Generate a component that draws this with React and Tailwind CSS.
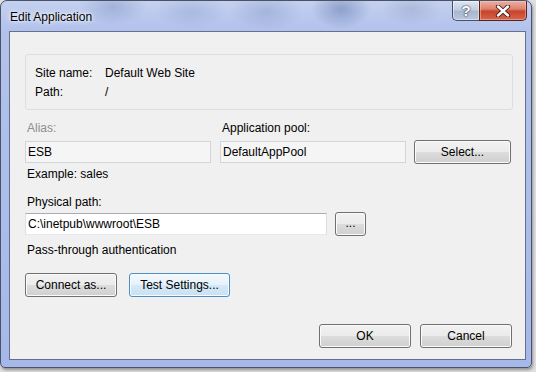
import React from 'react';

const font = { fontFamily: '"Liberation Sans", Arial, sans-serif' };

const btn =
  'flex items-center justify-center h-[24px] rounded-[3px] border border-[#707070] bg-[linear-gradient(to_bottom,#f2f2f2_0%,#ebebeb_48%,#dddddd_50%,#cfcfcf_100%)] shadow-[inset_0_0_0_1px_#fbfbfb] text-[12px] text-black';

const btnHot =
  'flex items-center justify-center h-[24px] rounded-[3px] border border-[#4f8fc4] bg-[linear-gradient(to_bottom,#f3f9fd_0%,#e6f2fb_48%,#d5e9f7_50%,#c8e1f3_100%)] shadow-[inset_0_0_0_1px_#f6fbff] text-[12px] text-black';

const readonlyBox =
  'flex items-center h-[22px] w-[186px] border border-[#d3d5d8] bg-[#f5f5f5] pl-[2px] text-[12px] text-black';

const CaptionButtons = () => (
  <div className="flex mr-[-1px]">
    <div className="flex items-center justify-center w-[27px] h-[20px] border border-[#46526a] border-t-0 border-r-0 rounded-bl-[5px] bg-[linear-gradient(to_bottom,#dfe6f3_0%,#c3cde2_45%,#a9b6cf_55%,#b9c6de_100%)] shadow-[inset_0_0_0_1px_rgba(255,255,255,0.45)]">
      <span className="text-[15px] font-bold leading-none text-white [text-shadow:0_0_1px_#2b3446,0_0_2px_#2b3446]">?</span>
    </div>
    <div className="flex items-center justify-center w-[48px] h-[20px] border border-[#5a2118] border-t-0 rounded-br-[5px] bg-[linear-gradient(to_bottom,#eab0a3_0%,#df8571_40%,#c8442c_55%,#d4674c_100%)] shadow-[inset_0_0_0_1px_rgba(255,210,200,0.45)]">
      <svg width="16" height="12" viewBox="0 0 16 12">
        <path d="M3 1.5 L13 10.5 M13 1.5 L3 10.5" stroke="#3a1a16" strokeWidth="4.2" strokeLinecap="round" />
        <path d="M3 1.5 L13 10.5 M13 1.5 L3 10.5" stroke="#ffffff" strokeWidth="2.4" strokeLinecap="round" />
      </svg>
    </div>
  </div>
);

export default function App() {
  return (
    <div className="w-[536px] h-[372px] bg-[#dedfe2] overflow-hidden" style={font}>
      <div className="w-[532px] h-[368px] flex flex-col pl-[8px] pr-[5px] pb-[7px] rounded-t-[7px] rounded-b-[5px] border border-[#4a5366] bg-[radial-gradient(ellipse_34px_18px_at_112px_6px,rgba(50,80,140,0.22),transparent),radial-gradient(ellipse_36px_18px_at_190px_10px,rgba(50,80,140,0.14),transparent),radial-gradient(ellipse_36px_20px_at_265px_10px,rgba(50,80,140,0.18),transparent),radial-gradient(ellipse_30px_20px_at_340px_8px,rgba(30,60,120,0.3),transparent),radial-gradient(ellipse_30px_16px_at_410px_8px,rgba(70,70,100,0.14),transparent),linear-gradient(to_bottom,#c4d0ef_0%,#b2c2ec_8%,#a6b8e9_100%)] shadow-[1px_2px_3px_rgba(0,0,0,0.35)]">
        <div className="h-[30px] flex items-start justify-between">
          <span className="pl-[1px] pt-[9px] text-[12px] leading-[14px] text-black [text-shadow:0_0_6px_#ffffff,0_0_3px_#ffffff]">
            Edit Application
          </span>
          <CaptionButtons />
        </div>

        <div className="flex-1 flex flex-col border border-[#66708a] bg-[#f0f0f0] pl-[15px] text-[12px] text-black">
          <div className="mt-[22px] mr-[12px] h-[56px] rounded-[3px] border border-[#dadfe3] pl-[9px] pt-[8px]">
            <div className="flex h-[19px] items-center">
              <span className="w-[70px]">Site name:</span>
              <span>Default Web Site</span>
            </div>
            <div className="flex h-[19px] items-center">
              <span className="w-[70px]">Path:</span>
              <span>/</span>
            </div>
          </div>

          <div className="mt-[10px] flex items-end">
            <div className="flex flex-col w-[186px]">
              <span className="h-[16px] leading-[16px] pl-[2px] text-[#8d8e90]">Alias:</span>
              <div className={`${readonlyBox} mt-[5px]`}>ESB</div>
            </div>
            <div className="flex flex-col w-[186px] ml-[9px]">
              <span className="h-[16px] leading-[16px] pl-[2px]">Application pool:</span>
              <div className={`${readonlyBox} mt-[5px]`}>DefaultAppPool</div>
            </div>
            <button className={`${btn} w-[97px] ml-[8px] mb-[-1px]`}>Select...</button>
          </div>

          <span className="mt-[3px] h-[16px] leading-[16px] pl-[2px]">Example: sales</span>

          <span className="mt-[12px] h-[16px] leading-[16px] pl-[2px]">Physical path:</span>
          <div className="mt-[2px] flex items-center">
            <div className="flex items-center h-[22px] w-[302px] border border-[#abadb3] border-l-[#dbdfe6] border-r-[#dbdfe6] border-b-[#e3e9ef] bg-white pl-[2px]">
              C:\inetpub\wwwroot\ESB
            </div>
            <button className={`${btn} w-[31px] ml-[8px] text-[10px] pb-[2px]`}>...</button>
          </div>

          <span className="mt-[6px] h-[16px] leading-[16px] pl-[2px]">Pass-through authentication</span>

          <div className="mt-[15px] flex">
            <button className={`${btn} w-[92px]`}>Connect as...</button>
            <button className={`${btnHot} w-[101px] ml-[12px]`}>Test Settings...</button>
          </div>

          <div className="mt-[27px] mr-[13px] flex justify-end">
            <button className={`${btn} w-[92px]`}>OK</button>
            <button className={`${btn} w-[92px] ml-[9px]`}>Cancel</button>
          </div>
        </div>
      </div>
    </div>
  );
}
